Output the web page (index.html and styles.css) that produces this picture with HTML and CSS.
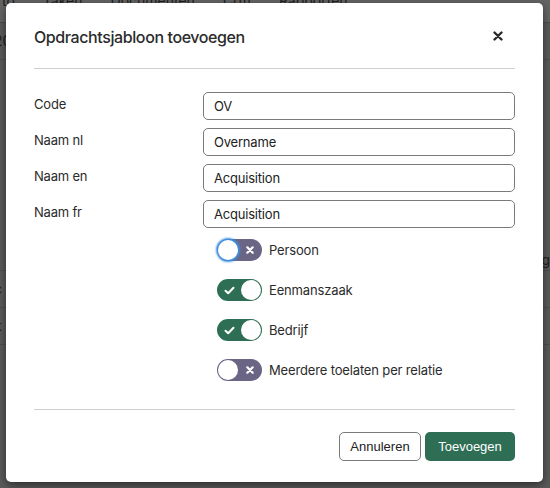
FILE: index.html
```html
<!DOCTYPE html>
<html>
<head>
    <title>Opdrachtsjabloon toevoegen</title>
    <link rel="stylesheet" href="styles.css">
</head>
<body>
    <div class="page">
        <div class="nav">
            <span>to</span>
            <span>Taken</span>
            <span>Documenten</span>
            <span>Crm</span>
            <span>Rapporten</span>
        </div>
        <div class="page-row">20</div>
        <div class="page-row page-row-tall">eg</div>
        <div class="page-row">c</div>
        <div class="page-row">k</div>
    </div>

    <div class="modal">
        <div class="modal-header">
            <h2 class="modal-title">Opdrachtsjabloon toevoegen</h2>
            <svg class="close" width="10" height="10" viewBox="0 0 10 10">
                <path d="M1.5 1.5 L8.5 8.5 M8.5 1.5 L1.5 8.5" stroke="#2b2b2b" stroke-width="2.4" stroke-linecap="round"/>
            </svg>
        </div>

        <form class="modal-body">
            <div class="fields">
                <label for="code">Code</label>
                <input type="text" id="code" value="OV">

                <label for="naam-nl">Naam nl</label>
                <input type="text" id="naam-nl" value="Overname">

                <label for="naam-en">Naam en</label>
                <input type="text" id="naam-en" value="Acquisition">

                <label for="naam-fr">Naam fr</label>
                <input type="text" id="naam-fr" value="Acquisition">
            </div>

            <div class="switches">
                <div class="switch-row">
                    <span class="switch off focus">
                        <span class="knob"></span>
                        <svg class="mark" width="8" height="8" viewBox="0 0 8 8"><path d="M1.3 1.3 L6.7 6.7 M6.7 1.3 L1.3 6.7" stroke="#fff" stroke-width="2.2" stroke-linecap="round"/></svg>
                    </span>
                    <span>Persoon</span>
                </div>
                <div class="switch-row">
                    <span class="switch on">
                        <svg class="mark" width="11" height="9" viewBox="0 0 11 9"><path d="M1.5 4.8 L4.2 7.3 L9.5 1.8" fill="none" stroke="#fff" stroke-width="2" stroke-linecap="round" stroke-linejoin="round"/></svg>
                        <span class="knob"></span>
                    </span>
                    <span>Eenmanszaak</span>
                </div>
                <div class="switch-row">
                    <span class="switch on">
                        <svg class="mark" width="11" height="9" viewBox="0 0 11 9"><path d="M1.5 4.8 L4.2 7.3 L9.5 1.8" fill="none" stroke="#fff" stroke-width="2" stroke-linecap="round" stroke-linejoin="round"/></svg>
                        <span class="knob"></span>
                    </span>
                    <span>Bedrijf</span>
                </div>
                <div class="switch-row">
                    <span class="switch off">
                        <span class="knob"></span>
                        <svg class="mark" width="8" height="8" viewBox="0 0 8 8"><path d="M1.3 1.3 L6.7 6.7 M6.7 1.3 L1.3 6.7" stroke="#fff" stroke-width="2.2" stroke-linecap="round"/></svg>
                    </span>
                    <span>Meerdere toelaten per relatie</span>
                </div>
            </div>
        </form>

        <div class="modal-footer">
            <button type="button" class="btn btn-cancel">Annuleren</button>
            <button type="button" class="btn btn-primary">Toevoegen</button>
        </div>
    </div>
</body>
</html>
```

FILE: styles.css
```css
body {
    margin: 0;
    width: 550px;
    height: 488px;
    overflow: hidden;
    background-color: #5a5a5a;
    font-family: Inter, "Noto Sans", sans-serif;
    position: relative;
}

/* page behind the overlay */
.page {
    color: #1e1e1e;
    font-size: 14px;
}

.nav {
    display: flex;
    gap: 28px;
    height: 30px;
    margin-top: -8px;
    padding-left: 2px;
    background-color: #646464;
    border-bottom: 1px solid #4c4c4c;
    line-height: 18px;
}

.page-row {
    height: 36px;
    line-height: 36px;
    border-bottom: 1px solid #4e4e4e;
    text-indent: -6px;
}

.page-row-tall {
    height: 210px;
    text-align: right;
    line-height: 400px;
}

/* modal */
.modal {
    position: absolute;
    left: 6px;
    top: 3px;
    width: 537px;
    height: 479px;
    box-sizing: border-box;
    background-color: #fff;
    border-radius: 5px;
    box-shadow: 0 3px 8px rgba(0, 0, 0, 0.5);
    padding: 0 28px;
    display: flex;
    flex-direction: column;
    color: #2b2b2b;
}

.modal-header {
    display: flex;
    align-items: center;
    justify-content: space-between;
    padding-top: 21px;
    padding-bottom: 18px;
    border-bottom: 1px solid #cfcfcf;
}

.modal-title {
    margin: 0;
    font-size: 16px;
    letter-spacing: -0.4px;
    font-weight: 500;
    line-height: 26px;
    color: #2b2b2b;
}

.close {
    margin-right: 12px;
    margin-top: -2px;
}

.modal-body {
    margin: 0;
    padding-top: 23px;
    flex: 1;
    border-bottom: 1px solid #cfcfcf;
}

.fields {
    display: grid;
    grid-template-columns: 169px 1fr;
    row-gap: 8px;
}

label {
    font-size: 13px;
    letter-spacing: -0.2px;
    line-height: 20px;
    padding-top: 2px;
}

input[type="text"] {
    height: 28px;
    box-sizing: border-box;
    padding: 0 10px;
    border: 1px solid #7a7a7a;
    border-radius: 5px;
    font-family: Inter, "Noto Sans", sans-serif;
    font-size: 13px;
    letter-spacing: -0.2px;
    color: #222;
}

.switches {
    display: flex;
    flex-direction: column;
    gap: 18px;
    margin-top: 11px;
    margin-left: 183px;
}

.switch-row {
    display: flex;
    align-items: center;
    gap: 7px;
    font-size: 13px;
    letter-spacing: -0.15px;
    height: 22px;
}

.switch {
    width: 45px;
    height: 22px;
    border-radius: 11px;
    display: flex;
    align-items: center;
    justify-content: space-between;
    box-sizing: border-box;
    padding: 1px;
}

.switch.off {
    background-color: #6b6585;
    padding-right: 8px;
}

.switch.on {
    background-color: #2e6e55;
    padding-left: 7px;
}

.knob {
    width: 20px;
    height: 20px;
    border-radius: 50%;
    background-color: #fff;
}

.switch.focus .knob {
    box-shadow: 0 0 2px 2px #3d8fe3;
}

.modal-footer {
    display: flex;
    justify-content: flex-end;
    gap: 4px;
    padding-top: 22px;
    padding-bottom: 21px;
}

.btn {
    height: 29px;
    border-radius: 5px;
    font-family: "Liberation Sans", Arial, sans-serif;
    font-size: 13px;
    cursor: pointer;
}

.btn-cancel {
    width: 82px;
    background-color: #fff;
    border: 1px solid #7a7a7a;
    color: #222;
}

.btn-primary {
    width: 90px;
    background-color: #2e6e55;
    border: none;
    color: #fff;
}
```
